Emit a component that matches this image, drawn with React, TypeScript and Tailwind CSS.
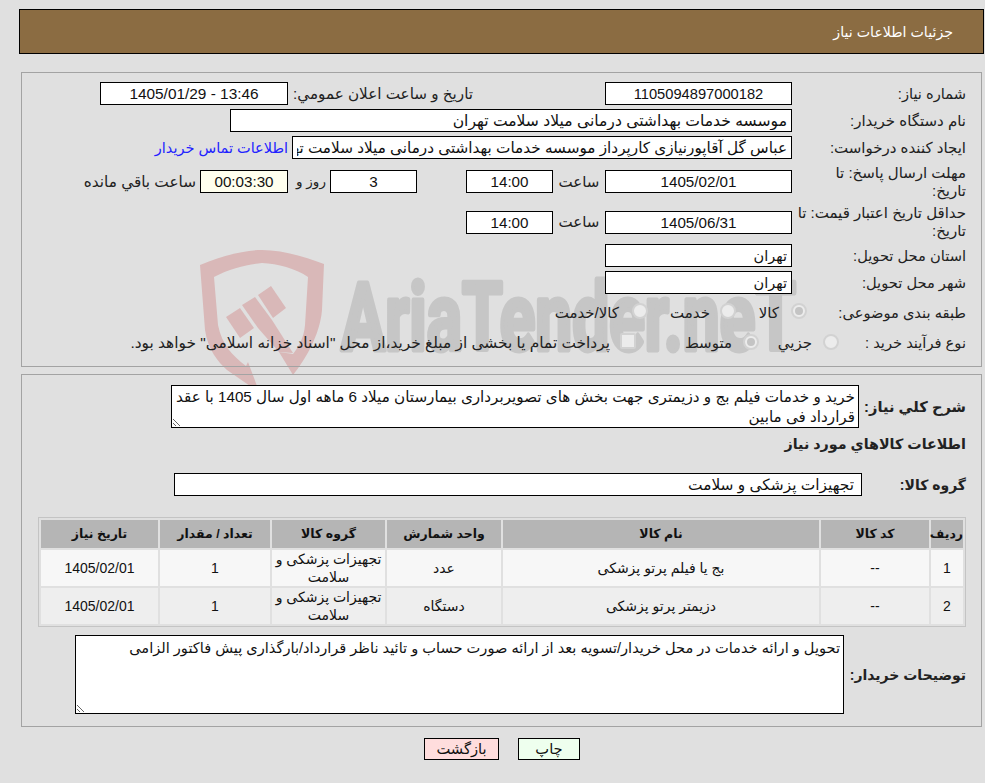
const F = "[font-family:'Liberation_Sans','DejaVu_Sans',sans-serif]";

function Field({ value, className = "", center = false }: { value: string; className?: string; center?: boolean }) {
  return (
    <input
      readOnly
      value={value}
      className={`block h-[23px] shrink-0 border border-black bg-white px-[4px] text-[15.2px] text-[#111] outline-none ${center ? "text-center" : "text-right"} ${className}`}
    />
  );
}

function Radio({ checked = false }: { checked?: boolean }) {
  return (
    <span className="flex h-[16px] w-[16px] shrink-0 items-center justify-center rounded-full border-2 border-[#d2d2d2] bg-[#ececec]">
      {checked && <span className="h-[8px] w-[8px] rounded-full bg-[#c4c4c4]" />}
    </span>
  );
}

function Watermark() {
  return (
    <svg aria-hidden="true" className="pointer-events-none absolute left-0 top-0" width="985" height="400" viewBox="0 0 985 400">
      <path
        fill="#d9b8b8"
        d="M200 265C225 255 245 250 262 250C280 250 300 255 324 264L322 310C320 335 305 360 293 375L279 352L293 354C298 348 304 338 305 325L308 277C295 268 278 264 262 263C250 264 230 268 214 277L218 325C222 345 232 355 246 366L248 362L257 386L250 386L227 370C218 362 208 350 205 330Z"
      />
      <g fill="#d9b8b8">
        <polygon points="226,317 240,308 254,328 240,338" />
        <polygon points="242,305 255,297 272,320 293,353 279,352 258,328" />
        <polygon points="258,295 271,286 286,308 273,318" />
      </g>
      <text transform="translate(341 350) scale(0.7 1)" direction="ltr" textAnchor="start" fontFamily="Roboto, sans-serif" fontWeight="700" fontSize="94" fill="#c6c6c6" stroke="#c6c6c6" strokeWidth="5" strokeLinejoin="round">
        AriaTender.neT
      </text>
    </svg>
  );
}

const rows = [
  ["1", "--", "بج یا فیلم پرتو پزشکی", "عدد", "تجهیزات پزشکی و سلامت", "1", "1405/02/01"],
  ["2", "--", "دزیمتر پرتو پزشکی", "دستگاه", "تجهیزات پزشکی و سلامت", "1", "1405/02/01"],
];
const heads = ["ردیف", "کد کالا", "نام کالا", "واحد شمارش", "گروه کالا", "تعداد / مقدار", "تاریخ نیاز"];
const widths = ["w-[32px]", "w-[108px]", "w-[316px]", "w-[114px]", "w-[113px]", "w-[110px]", "w-[117px]"];

export default function App() {
  return (
    <div dir="rtl" className={`relative min-h-[783px] w-[985px] overflow-hidden bg-[#e0e0e0] text-[15px] leading-[18px] text-[#222] ${F}`}>
      <Watermark />
      <div className="relative z-10 pt-[9px]">
        <div className="mr-px ml-[19px] flex h-[45px] items-center border border-black bg-[#8b6c42] pr-[30px] text-[14.2px] text-white">
          جزئیات اطلاعات نیاز
        </div>

        <section className="mr-[3px] ml-[21px] mt-[18px] h-[295px] border border-[#a3a3a3] pr-[15px] pt-[9px]">
          <div className="flex h-[23px] items-center">
            <div className="w-[174px] shrink-0 text-[14.67px]">شماره نیاز:</div>
            <Field center value="1105094897000182" className="w-[187px] !text-[14.7px]" />
            <div className="mr-[132px] w-[185px] shrink-0 whitespace-nowrap text-[15.2px]">تاریخ و ساعت اعلان عمومي:</div>
            <Field center value="13:46 - 1405/01/29" className="w-[188px] !text-[15.4px]" />
          </div>
          <div className="mt-[4px] flex h-[23px] items-center">
            <div className="w-[174px] shrink-0">نام دستگاه خریدار:</div>
            <Field value="موسسه خدمات بهداشتی درمانی میلاد سلامت تهران" className="w-[562px] !text-[15.6px]" />
          </div>
          <div className="mt-[4px] flex h-[23px] items-center">
            <div className="w-[174px] shrink-0">ایجاد کننده درخواست:</div>
            <Field value="عباس گل آقاپورنیازی کارپرداز موسسه خدمات بهداشتی درمانی میلاد سلامت تهران" className="w-[500px] !text-[15.25px]" />
            <a className="mr-[4px] whitespace-nowrap text-[14.5px] text-[#2222ff]">اطلاعات تماس خریدار</a>
          </div>
          <div className="mt-[4px] flex h-[37px] items-center">
            <div className="w-[174px] shrink-0 pl-[30px]">مهلت ارسال پاسخ: تا تاریخ:</div>
            <Field center value="1405/02/01" className="w-[187px]" />
            <div className="w-[52px] shrink-0 text-center">ساعت</div>
            <Field center value="14:00" className="w-[87px]" />
            <div className="w-[49px] shrink-0" />
            <Field center value="3" className="w-[87px]" />
            <div className="w-[42px] shrink-0 pl-[4px] text-center text-[13.5px]">روز و</div>
            <Field center value="00:03:30" className="w-[88px] !bg-[#ffffee]" />
            <div className="mr-[4px] whitespace-nowrap text-[15.3px]">ساعت باقي مانده</div>
          </div>
          <div className="mt-[4px] flex h-[36px] items-center">
            <div className="w-[174px] shrink-0">حداقل تاریخ اعتبار قیمت: تا تاریخ:</div>
            <Field center value="1405/06/31" className="w-[187px]" />
            <div className="w-[52px] shrink-0 text-center">ساعت</div>
            <Field center value="14:00" className="w-[87px]" />
          </div>
          <div className="mt-[4px] flex h-[23px] items-center">
            <div className="w-[174px] shrink-0 text-[14.67px]">استان محل تحویل:</div>
            <Field value="تهران" className="w-[187px] !text-[14.5px]" />
          </div>
          <div className="mt-[4px] flex h-[23px] items-center">
            <div className="w-[174px] shrink-0 text-[14.67px]">شهر محل تحویل:</div>
            <Field value="تهران" className="w-[187px] !text-[14.5px]" />
          </div>
          <div className="mt-[4px] flex h-[30px] items-center">
            <div className="w-[159px] shrink-0 text-[14.67px]">طبقه بندی موضوعی:</div>
            <span className="-mt-[4px]"><Radio checked /></span>
            <span className="mr-[12px] w-[43px] shrink-0">کالا</span>
            <span className="-mt-[4px]"><Radio /></span>
            <span className="mr-[10px] w-[62px] shrink-0">خدمت</span>
            <span className="-mt-[4px]"><Radio /></span>
            <span className="mr-[13px]">کالا/خدمت</span>
          </div>
          <div className="flex h-[30px] items-center">
            <div className="w-[127px] shrink-0 text-[14.67px]">نوع فرآیند خرید :</div>
            <span className="-mt-[2px]"><Radio /></span>
            <span className="mr-[11px] w-[53px] shrink-0">جزيي</span>
            <span className="-mt-[2px]"><Radio checked /></span>
            <span className="mr-[11px] w-[96px] shrink-0">متوسط</span>
            <span className="-mt-[4px] h-[16px] w-[16px] shrink-0 rounded-[2px] border-2 border-[#d2d2d2] bg-[#ececec]" />
            <span className="mr-[10px] whitespace-nowrap text-[15.4px]">پرداخت تمام یا بخشی از مبلغ خرید،از محل "اسناد خزانه اسلامی" خواهد بود.</span>
          </div>
        </section>

        <section className="mr-[3px] ml-[21px] mt-[7px] h-[353px] border border-[#a3a3a3] pr-[15px] pt-[10px]">
          <div className="flex h-[43px] items-center">
            <div className="w-[107px] shrink-0 text-[14.67px] font-bold">شرح کلي نیاز:</div>
            <textarea
              readOnly
              defaultValue="خرید و خدمات فیلم بج و دزیمتری جهت بخش های تصویربرداری بیمارستان میلاد 6 ماهه اول سال 1405 با عقد قرارداد فی مابین"
              className="block h-[43px] w-[688px] shrink-0 border border-black bg-white px-[3px] py-[1px] pr-[3px] text-[15.2px] leading-[20px] text-[#111] outline-none"
            />
          </div>
          <div className="mt-[7px] flex h-[18px] items-center text-[14.3px] font-bold">اطلاعات کالاهاي مورد نیاز</div>
          <div className="mt-[20px] flex h-[23px] items-center">
            <div className="w-[104px] shrink-0 text-[14px] font-bold">گروه کالا:</div>
            <Field value="تجهیزات پزشکی و سلامت" className="w-[688px] !pr-[7px] !text-[15.4px]" />
          </div>
          <table className="ml-[16px] mr-0 mt-[21px] w-[928px] table-fixed border-separate border-spacing-[2px] border border-[#c4c4c4] text-center text-[14px] leading-[18px]">
            <thead>
              <tr>
                {heads.map((h, i) => (
                  <th key={h} className={`h-[28px] bg-[#b5b5b5] p-0 text-[12.5px] font-bold text-[#111] ${widths[i]}`}>
                    {h}
                  </th>
                ))}
              </tr>
            </thead>
            <tbody>
              {rows.map((r, ri) => (
                <tr key={r[0]}>
                  {r.map((c, i) => (
                    <td key={i} className={`h-[36px] p-0 text-[#111] ${ri === 0 ? "bg-[#f7f7f7]" : "bg-[#eeeeee]"}`}>
                      {c}
                    </td>
                  ))}
                </tr>
              ))}
            </tbody>
          </table>
          <div className="mt-[8px] flex h-[79px] items-center">
            <div className="w-[122px] shrink-0 text-[14px] font-bold">توضیحات خریدار:</div>
            <textarea
              readOnly
              defaultValue="تحویل و ارائه خدمات در محل خریدار/تسویه بعد از ارائه صورت حساب و تائید ناظر قرارداد/بارگذاری پیش فاکتور الزامی"
              className="block h-[79px] w-[769px] shrink-0 border border-black bg-white px-[3px] py-[2px] text-[14.6px] leading-[20px] text-[#111] outline-none"
            />
          </div>
        </section>

        <div className="mt-[11px] flex h-[22px] items-stretch pr-[405px]">
          <button className="w-[62px] border border-black bg-[#eeffee] text-[14.67px] text-[#111]">چاپ</button>
          <button className="mr-[19px] w-[75px] border border-black bg-[#ffdddd] text-[14.67px] text-[#111]">بازگشت</button>
        </div>
      </div>
    </div>
  );
}
